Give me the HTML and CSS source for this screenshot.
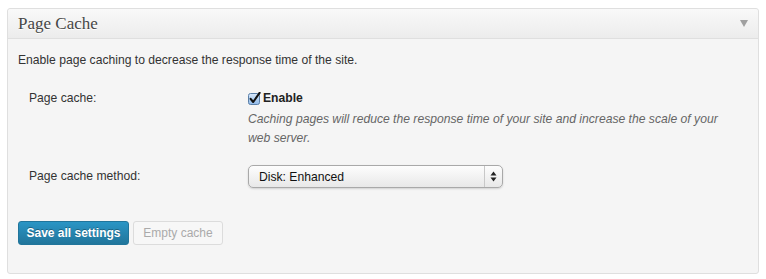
FILE: index.html
```html
<!DOCTYPE html>
<html lang="en">
<head>
  <meta charset="UTF-8">
  <title>Page Cache</title>
  <link rel="stylesheet" href="styles.css">
</head>
<body>
  <div class="postbox">
    <div class="postbox-head">
      <h3>Page Cache</h3>
      <svg class="toggle" width="8" height="7" viewBox="0 0 8 7">
        <path d="M0 0 L8 0 L4 7 Z" fill="#a0a0a0"/>
      </svg>
    </div>
    <div class="postbox-body">
      <p class="intro">Enable page caching to decrease the response time of the site.</p>
      <div class="form-row">
        <div class="row-label">Page cache:</div>
        <div class="row-field">
          <label class="check">
            <svg width="13" height="13" viewBox="0 0 13 13">
              <defs>
                <linearGradient id="cb" x1="0" y1="0" x2="0" y2="1">
                  <stop offset="0" stop-color="#d8e9fb"/>
                  <stop offset="1" stop-color="#8fb9e8"/>
                </linearGradient>
              </defs>
              <rect x="0.5" y="1.5" width="11" height="11" rx="2" fill="url(#cb)" stroke="#5a7fa8"/>
              <path d="M2.6 6.8 L5.2 10 L11.6 0.8" fill="none" stroke="#111" stroke-width="2.1" stroke-linecap="round" stroke-linejoin="round"/>
            </svg>
            <b>Enable</b>
          </label>
          <p class="desc">Caching pages will reduce the response time of your site and increase the scale of your web server.</p>
        </div>
      </div>
      <div class="form-row method">
        <div class="row-label">Page cache method:</div>
        <div class="row-field">
          <span class="select-wrap">
            <select>
              <option>Disk: Enhanced</option>
            </select>
            <span class="select-arrows">
              <svg width="7" height="11" viewBox="0 0 7 11">
                <path d="M3.5 0.5 L6.5 4.5 L0.5 4.5 Z M0.5 6.5 L6.5 6.5 L3.5 10.5 Z" fill="#222"/>
              </svg>
            </span>
          </span>
        </div>
      </div>
      <div class="actions">
        <button class="btn-primary">Save all settings</button>
        <button class="btn-disabled" disabled>Empty cache</button>
      </div>
    </div>
  </div>
</body>
</html>
```

FILE: styles.css
```css
body {
  margin: 0;
  padding: 8px 7px;
  background: #fff;
  font-family: 'Liberation Sans', Arial, sans-serif;
  font-size: 12.15px;
  color: #333;
}
.postbox {
  border: 1px solid #dfdfdf;
  border-radius: 3px;
  background: #f5f5f5;
  height: 266px;
  box-sizing: border-box;
}
.postbox-head {
  display: flex;
  align-items: center;
  justify-content: space-between;
  height: 29px;
  padding: 0 10px;
  border-bottom: 1px solid #dfdfdf;
  background: linear-gradient(#f9f9f9, #ececec);
  border-radius: 3px 3px 0 0;
}
.postbox-head h3 {
  margin: 0;
  font-family: 'Liberation Serif', Georgia, serif;
  font-weight: normal;
  font-size: 17px;
  color: #464646;
  text-shadow: 0 1px 0 #fff;
}
.postbox-body {
  padding: 12px 10px 0;
}
.intro {
  margin: 0 0 20px;
  line-height: 18px;
}
.form-row {
  display: flex;
}
.row-label {
  width: 219px;
  padding-left: 11px;
  line-height: 18px;
}
.row-field {
  flex: 1;
}
.check {
  display: flex;
  align-items: center;
  gap: 2px;
  line-height: 18px;
}
.check b {
  font-weight: bold;
  color: #222;
}
.desc {
  margin: 3px 0 0;
  font-style: italic;
  color: #666;
  line-height: 19px;
  max-width: 478px;
}
.method {
  margin-top: 17px;
}
.method .row-label {
  padding-top: 2px;
}
.select-wrap {
  position: relative;
  display: inline-block;
}
select {
  appearance: none;
  -webkit-appearance: none;
  display: block;
  width: 255px;
  height: 23px;
  padding: 0 0 0 10px;
  font-family: 'Liberation Sans', Arial, sans-serif;
  font-size: 12.15px;
  color: #111;
  border: 1px solid #a9a9a9;
  border-radius: 5px;
  background: linear-gradient(#fdfdfd, #e8e8e8);
  box-shadow: 0 1px 2px rgba(0, 0, 0, 0.15);
  outline: none;
}
.select-arrows {
  position: absolute;
  top: 1px;
  right: 1px;
  bottom: 1px;
  width: 17px;
  border-left: 1px solid #c8c8c8;
  display: flex;
  align-items: center;
  justify-content: center;
  pointer-events: none;
}
.actions {
  display: flex;
  gap: 4px;
  margin-top: 33px;
}
.actions button {
  height: 24px;
  padding: 0;
  white-space: nowrap;
  font-family: 'Liberation Sans', Arial, sans-serif;
  font-size: 12px;
  border-radius: 3px;
}
.btn-primary {
  width: 111px;
  font-weight: bold;
  color: #fff;
  border: 1px solid #21759b;
  background: linear-gradient(#2a95c5, #21759b);
  text-shadow: 0 -1px 0 rgba(0, 0, 0, 0.3);
}
.btn-disabled {
  width: 90px;
  color: #aaa;
  border: 1px solid #dcdcdc;
  background: #f7f7f7;
}
```
